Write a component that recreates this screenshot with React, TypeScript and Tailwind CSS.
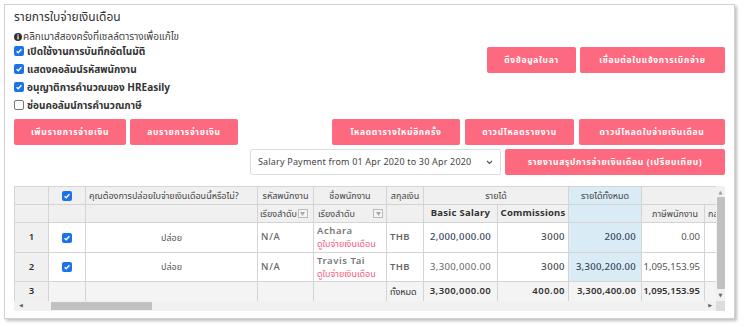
// Payroll slip list — ตารางใบจ่ายเงินเดือน
import React from 'react';

const FONT = { fontFamily: '"Noto Sans", "Noto Sans Thai", "DejaVu Sans", sans-serif' };

const Btn: React.FC<{ label: string; className?: string }> = ({ label, className = '' }) => (
  <button
    className={`h-[26px] whitespace-nowrap rounded-[2px] bg-[#fd6a80] px-0 text-[8.5px] font-bold tracking-[0.08em] text-white ${className}`}
  >
    {label}
  </button>
);

const Check: React.FC<{ on?: boolean }> = ({ on = true }) =>
  on ? (
    <span className="inline-flex h-[10px] w-[10px] items-center justify-center rounded-[2px] bg-[#1a73e8]">
      <svg width="8" height="8" viewBox="0 0 10 10">
        <path d="M2 5.2l2 2 4-4.5" fill="none" stroke="#fff" strokeWidth="1.8" />
      </svg>
    </span>
  ) : (
    <span className="inline-block h-[10px] w-[10px] rounded-[2px] border border-[#777] bg-white" />
  );

const Filter = () => (
  <span className="ml-[1px] inline-flex h-[9px] w-[10px] items-center justify-center border border-[#bbb] bg-[#f4f4f4]">
    <svg width="5" height="4" viewBox="0 0 5 4">
      <path d="M0 0h5L2.5 4z" fill="#aaa" />
    </svg>
  </span>
);

// column widths, left to right
const cols = [34, 37, 172, 56, 73, 37, 74, 71, 73, 63, 20];

const th = 'border border-[#d4d4d4] bg-[#f0f0f0] font-normal text-[#444]';
const td = 'border border-[#d4d4d4] bg-white';
const tot = 'border border-[#d4d4d4] bg-[#f4f4f4]';

const rows = [
  { n: 1, name: 'Achara', basic: '2,000,000.00', basicCls: 'text-[#34465a] font-medium', com: '3000', total: '200.00', tax: '0.00' },
  { n: 2, name: 'Travis Tai', basic: '3,300,000.00', basicCls: 'text-[#666]', com: '3000', total: '3,300,200.00', tax: '1,095,153.95' },
];

const PayrollTable = () => (
  <div className="mt-[11px] flex flex-col">
    <div className="flex">
      <div className="h-[115px] flex-1 overflow-hidden">
        <table className="table-fixed border-collapse text-[9px]" style={{ width: cols.reduce((a, b) => a + b, 0) }}>
          <colgroup>
            {cols.map((w, i) => (
              <col key={i} style={{ width: w }} />
            ))}
          </colgroup>
          <thead>
            <tr className="h-[18px]">
              <th className={th}></th>
              <th className={th}>
                <span className="flex justify-center">
                  <Check />
                </span>
              </th>
              <th className={`${th} pl-[3px] text-left`}>คุณต้องการปล่อยใบจ่ายเงินเดือนนี้หรือไม่?</th>
              <th className={th}>รหัสพนักงาน</th>
              <th className={th}>ชื่อพนักงาน</th>
              <th className={th}>สกุลเงิน</th>
              <th className={th} colSpan={2}>รายได้</th>
              <th className={`${th} !bg-[#d9ecf6]`}>รายได้ทั้งหมด</th>
              <th className={`${th} border-r-0`} colSpan={2}></th>
            </tr>
            <tr className="h-[18px]">
              <th className={th}></th>
              <th className={th}></th>
              <th className={th}></th>
              <th className={`${th} text-left pl-[2px]`}>
                <span className="flex items-center">
                  เรียงลำดับ
                  <Filter />
                </span>
              </th>
              <th className={th}>
                <span className="flex items-center justify-between pl-[4px] pr-[3px]">
                  เรียงลำดับ
                  <Filter />
                </span>
              </th>
              <th className={th}></th>
              <th className={`${th} !font-bold text-[9.5px] !text-[#333] tracking-[0.03em]`}>Basic Salary</th>
              <th className={`${th} !font-bold text-[9.5px] !text-[#333] tracking-[0.02em]`}>Commissions</th>
              <th className={`${th} !bg-[#d9ecf6]`}></th>
              <th className={`${th} text-right pr-[6px]`}>ภาษีพนักงาน</th>
              <th className={`${th} text-left pl-[3px]`}>กล</th>
            </tr>
          </thead>
          <tbody className="text-[9.5px] text-[#555]">
            {rows.map((r) => (
              <tr key={r.n} className={r.n === 1 ? 'h-[30px]' : 'h-[29px]'}>
                <td className={`${td} !bg-[#f0f0f0] text-center font-semibold text-[#333]`}>{r.n}</td>
                <td className={td}>
                  <span className="flex justify-center">
                    <Check />
                  </span>
                </td>
                <td className={`${td} text-center text-[9px]`}>ปล่อย</td>
                <td className={`${td} pl-[3px] font-medium tracking-[0.08em] text-[#666]`}>N/A</td>
                <td className={`${td} pl-[3px] align-top leading-[13px]`}>
                  <div className="pt-[1px] font-semibold tracking-[0.06em] text-[#777]">{r.name}</div>
                  <div className="whitespace-nowrap text-[9px] text-[#f25a78]">ดูใบจ่ายเงินเดือน</div>
                </td>
                <td className={`${td} pl-[3px] font-semibold tracking-[0.04em] text-[#666]`}>THB</td>
                <td className={`${td} text-center tracking-[0.04em] ${r.basicCls}`}>{r.basic}</td>
                <td className={`${td} pr-[3px] text-right font-medium tracking-[0.05em] text-[#444]`}>{r.com}</td>
                <td className={`${td} !bg-[#d9ecf6] pr-[5px] text-right font-medium tracking-[0.03em] text-[#34465a]`}>{r.total}</td>
                <td className={`${td} whitespace-nowrap pr-[4px] text-right`}>{r.tax}</td>
                <td className={`${td} border-r-0`}></td>
              </tr>
            ))}
            <tr className="h-[20px] text-[#333]">
              <td className={`${tot} !bg-[#f0f0f0] text-center font-semibold`}>3</td>
              <td className={tot}></td>
              <td className={tot}></td>
              <td className={tot}></td>
              <td className={tot}></td>
              <td className={`${tot} pl-[3px] text-[9px]`}>ทั้งหมด</td>
              <td className={`${tot} text-center font-semibold tracking-[0.04em]`}>3,300,000.00</td>
              <td className={`${tot} pr-[3px] text-right font-semibold tracking-[0.05em]`}>400.00</td>
              <td className={`${tot} whitespace-nowrap pr-[5px] text-right font-semibold tracking-[0.02em]`}>3,300,400.00</td>
              <td className={`${tot} whitespace-nowrap pr-[4px] text-right font-semibold`}>1,095,153.95</td>
              <td className={`${tot} border-r-0`}></td>
            </tr>
          </tbody>
        </table>
      </div>
      {/* vertical scrollbar */}
      <div className="flex h-[115px] w-[9px] flex-col items-center bg-[#f1f1f1]">
        <span className="mt-[3px] text-[5px] leading-[6px] text-[#999]">▲</span>
        <div className="mt-[2px] w-[8px] flex-1 rounded-[1px] bg-[#c1c1c1]" />
        <span className="mb-[3px] mt-[3px] text-[5px] leading-[6px] text-[#666]">▼</span>
      </div>
    </div>
    {/* horizontal scrollbar */}
    <div className="flex h-[10px]">
      <div className="flex flex-1 items-center bg-[#f1f1f1]">
        <span className="ml-[5px] text-[5px] text-[#666]">◀</span>
        <div className="ml-[28px] h-[8px] w-[101px] bg-[#c1c1c1]" />
        <span className="ml-auto mr-[4px] text-[5px] text-[#666]">▶</span>
      </div>
      <div className="w-[9px] bg-[#dcdcdc]" />
    </div>
  </div>
);

export default function App() {
  return (
    <div className="h-[327px] w-[744px] bg-white p-[4px] pr-[9px]" style={FONT}>
      <div className="h-[315px] border border-[#d0d0d0] bg-white px-[9px] pt-[3px] shadow-[2px_2px_3px_rgba(0,0,0,0.25)]">
        {/* header + options */}
        <div className="flex justify-between">
          <div>
            <h1 className="text-[12px] leading-[18px] text-[#333]">รายการใบจ่ายเงินเดือน</h1>
            <div className="mt-[5px] flex items-center gap-[1px] text-[10px] leading-[11px] text-[#444]">
              <svg width="8" height="8" viewBox="0 0 10 10">
                <circle cx="5" cy="5" r="5" fill="#333" />
                <rect x="4.2" y="4" width="1.6" height="4" fill="#fff" />
                <circle cx="5" cy="2.6" r="0.9" fill="#fff" />
              </svg>
              คลิกเมาส์สองครั้งที่เซลล์ตารางเพื่อแก้ไข
            </div>
            <div className="flex flex-col text-[10px] font-bold text-[#333]">
              {[
                ['เปิดใช้งานการบันทึกอัตโนมัติ', true],
                ['แสดงคอลัมน์รหัสพนักงาน', true],
                ['อนุญาติการคำนวณของ HREasily', true],
                ['ซ่อนคอลัมน์การคำนวณภาษี', false],
              ].map(([label, on]) => (
                <label key={label as string} className="flex h-[18px] items-center gap-[3px]">
                  <Check on={on as boolean} />
                  {label as string}
                </label>
              ))}
            </div>
          </div>
          <div className="mt-[39px] flex gap-[4px]">
            <Btn label="ดึงข้อมูลใบลา" className="w-[89px]" />
            <Btn label="เชื่อมต่อใบแจ้งการเบิกจ่าย" className="w-[145px]" />
          </div>
        </div>

        {/* action buttons */}
        <div className="mt-[5px] flex">
          <Btn label="เพิ่มรายการจ่ายเงิน" className="w-[112px]" />
          <Btn label="ลบรายการจ่ายเงิน" className="ml-[4px] w-[108px]" />
          <Btn label="โหลดตารางใหม่อีกครั้ง" className="ml-auto w-[128px]" />
          <Btn label="ดาวน์โหลดรายงาน" className="ml-[5px] w-[109px]" />
          <Btn label="ดาวน์โหลดใบจ่ายเงินเดือน" className="ml-[5px] w-[146px]" />
        </div>
        <div className="mt-[4px] flex justify-end gap-[4px]">
          <div className="flex h-[26px] w-[251px] items-center justify-between whitespace-nowrap rounded-[2px] border border-[#ddd] bg-white pl-[7px] pr-[7px] text-[9px] tracking-[0.02em] text-[#444]">
            Salary Payment from 01 Apr 2020 to 30 Apr 2020
            <svg width="7" height="5" viewBox="0 0 7 5">
              <path d="M1 1l2.5 2.5L6 1" fill="none" stroke="#555" strokeWidth="1.2" />
            </svg>
          </div>
          <Btn label="รายงานสรุปการจ่ายเงินเดือน (เปรียบเทียบ)" className="w-[220px]" />
        </div>

        <PayrollTable />
      </div>
    </div>
  );
}
